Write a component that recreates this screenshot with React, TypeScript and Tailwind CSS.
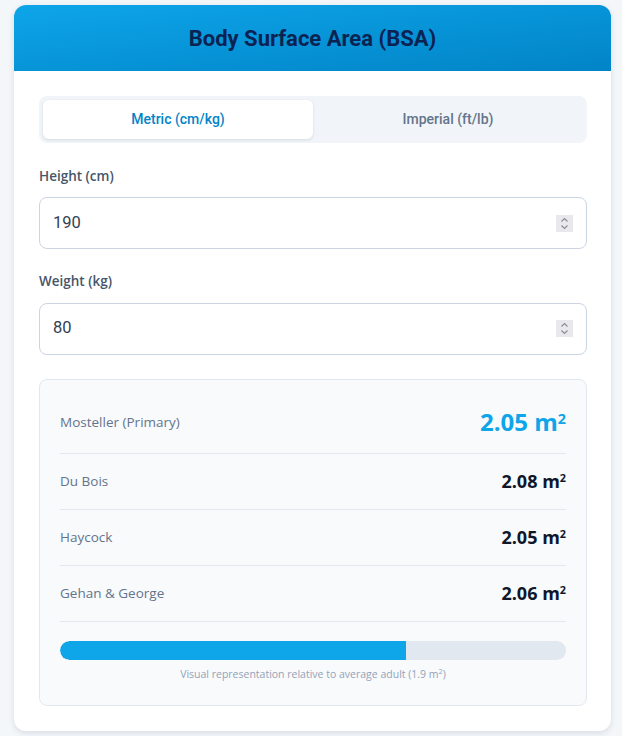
import { useState } from 'react'

const results = [
  { label: 'Mosteller (Primary)', value: '2.05', primary: true },
  { label: 'Du Bois', value: '2.08' },
  { label: 'Haycock', value: '2.05' },
  { label: 'Gehan & George', value: '2.06' },
]

function Spinner() {
  return (
    <span className="flex h-[17px] w-[17px] flex-col items-center justify-center bg-[#e9e9ed]">
      <svg width="9" height="15" viewBox="0 0 9 15" fill="none" stroke="#8a8a93" strokeWidth="1.1">
        <path d="M1.5 5.5 L4.5 2.5 L7.5 5.5" />
        <path d="M1.5 9.5 L4.5 12.5 L7.5 9.5" />
      </svg>
    </span>
  )
}

function NumberField({ label, value }: { label: string; value: string }) {
  return (
    <div>
      <label className="mb-[11px] block text-[13.5px] font-semibold text-[#475569] font-['Open_Sans',sans-serif]">
        {label}
      </label>
      <div className="flex h-[52px] items-center justify-between rounded-lg border border-[#cbd5e1] bg-white pl-[13px] pr-[13px]">
        <span className="text-[16.5px] text-[#334155] font-['Roboto',sans-serif]">{value}</span>
        <Spinner />
      </div>
    </div>
  )
}

export default function App() {
  const [unit, setUnit] = useState<'metric' | 'imperial'>('metric')
  const bsa = 2.05

  return (
    <div className="min-h-screen bg-[#f4f7fa] pl-[14px] pr-[11px] pt-[5px]">
      <div className="overflow-hidden rounded-xl bg-white shadow-[0_2px_6px_rgba(15,23,42,0.12)]">
        <div className="flex h-[66px] items-center justify-center bg-gradient-to-br from-[#0ea5e9] to-[#0284c7]">
          <h1 className="text-[22px] font-bold text-[#0b2352] font-['Roboto',sans-serif]">Body Surface Area (BSA)</h1>
        </div>

        <div className="pl-[25px] pr-6 pt-[25px] pb-[25px]">
          <div className="mb-[23px] flex rounded-lg bg-[#f1f5f9] p-1 font-['Roboto',sans-serif]">
            <button
              onClick={() => setUnit('metric')}
              className={`h-[39px] flex-1 rounded-md text-[14px] font-medium ${unit === 'metric' ? 'bg-white text-[#0284c7] shadow-[0_1px_3px_rgba(15,23,42,0.12)]' : 'text-[#64748b]'}`}
            >
              Metric (cm/kg)
            </button>
            <button
              onClick={() => setUnit('imperial')}
              className={`h-[39px] flex-1 rounded-md text-[14px] font-medium ${unit === 'imperial' ? 'bg-white text-[#0284c7] shadow-[0_1px_3px_rgba(15,23,42,0.12)]' : 'text-[#64748b]'}`}
            >
              Imperial (ft/lb)
            </button>
          </div>

          <div className="flex flex-col gap-[22px]">
            <NumberField label="Height (cm)" value="190" />
            <NumberField label="Weight (kg)" value="80" />
          </div>

          <div className="mt-[24px] rounded-lg border border-[#e2e8f0] bg-[#f8fafc] px-5 pt-[12px] pb-[23px] font-['Open_Sans',sans-serif]">
            {results.map((r) => (
              <div
                key={r.label}
                className={`flex items-center justify-between border-b border-[#e2e8f0] ${r.primary ? 'h-[62px]' : 'h-[56px]'}`}
              >
                <span className="text-[13.5px] text-[#64748b]">{r.label}</span>
                <span className={`font-bold ${r.primary ? 'text-[24px] text-[#0ea5e9]' : 'text-[18px] text-[#0f172a]'}`}>
                  {r.value} m<sup className="text-[0.6em]">2</sup>
                </span>
              </div>
            ))}

            <div className="mt-[19px] h-[19px] w-full overflow-hidden rounded-full bg-[#e2e8f0]">
              <div className="h-full rounded-l-full bg-[#0ea5e9]" style={{ width: `${Math.min((bsa / 3) * 100, 100)}%` }} />
            </div>
            <p className="mt-[7px] text-center text-[10.5px] text-[#94a3b8]">
              Visual representation relative to average adult (1.9 m<sup className="text-[0.7em]">2</sup>)
            </p>
          </div>
        </div>
      </div>
    </div>
  )
}
